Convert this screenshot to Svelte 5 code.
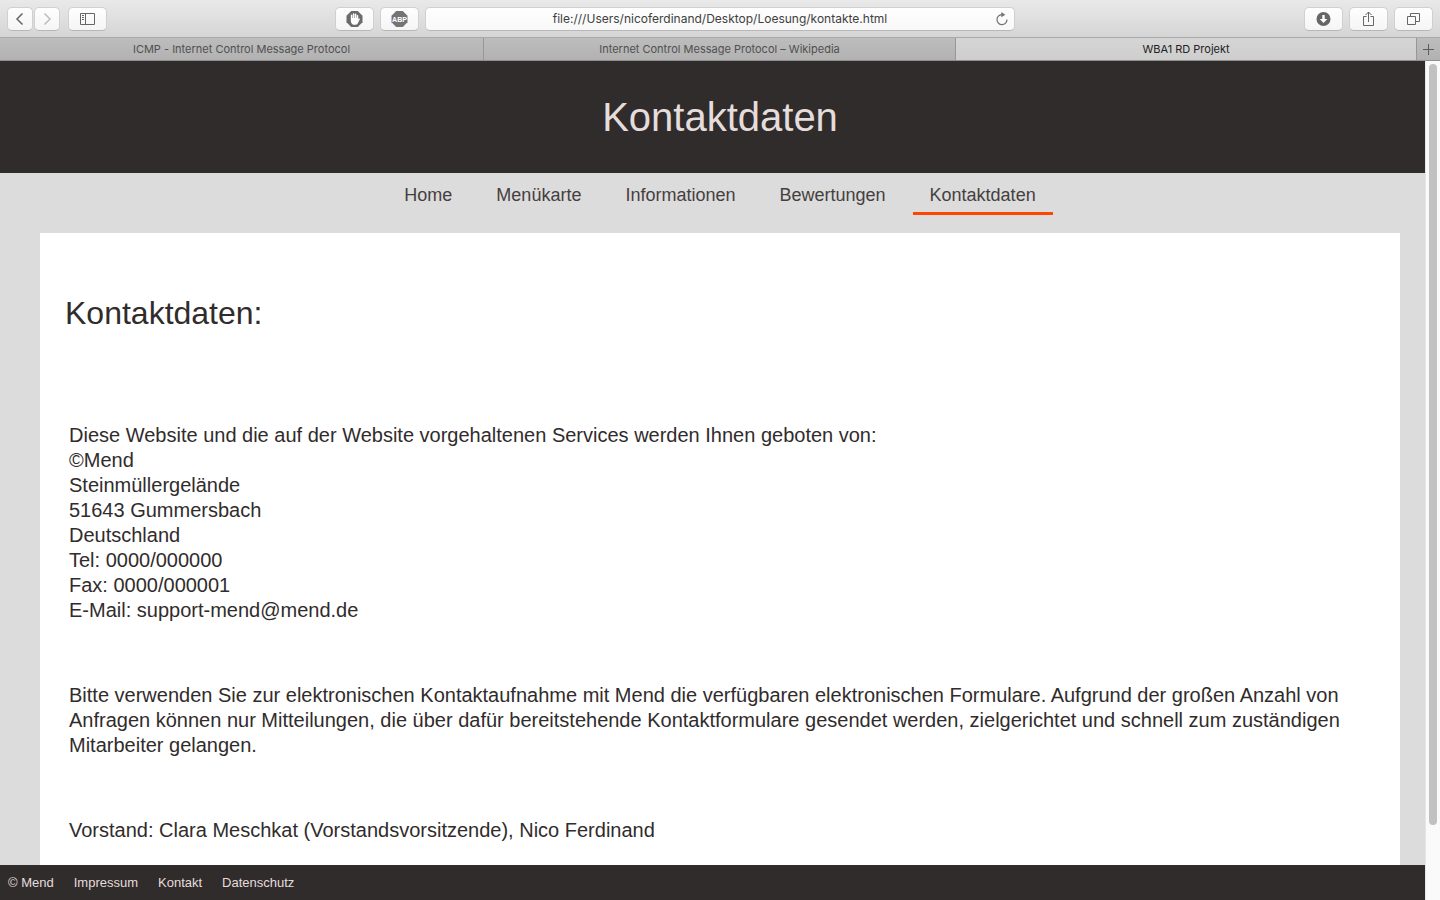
<script>
  const tabs = [
    'ICMP - Internet Control Message Protocol',
    'Internet Control Message Protocol – Wikipedia',
    'WBA1 RD Projekt'
  ];
  const activeTab = 2;
  const nav = ['Home', 'Menükarte', 'Informationen', 'Bewertungen', 'Kontaktdaten'];
  const current = 'Kontaktdaten';
  const footerLinks = ['Impressum', 'Kontakt', 'Datenschutz'];
  let address = $state('file:///Users/nicoferdinand/Desktop/Loesung/kontakte.html');
</script>

<div class="window">
  <div class="toolbar">
    <div class="side">
      <div class="group wide">
        <div class="pair">
          <button class="tool small" aria-label="Zurück">
            <svg width="12" height="14" viewBox="0 0 12 14"><path d="M8.5 1.5 3 7l5.5 5.5" fill="none" stroke="#666" stroke-width="1.5" /></svg>
          </button>
          <button class="tool small" aria-label="Vorwärts">
            <svg width="12" height="14" viewBox="0 0 12 14"><path d="M3.5 1.5 9 7l-5.5 5.5" fill="none" stroke="#bdbdbd" stroke-width="1.5" /></svg>
          </button>
        </div>
        <button class="tool" aria-label="Seitenleiste">
          <svg width="15" height="12" viewBox="0 0 15 12" fill="none" stroke="#666"><path d="M.5.5h14v11H.5zM5.5.5v11M2 2.500h2M2 4.500h2M2 6.500h2" /></svg>
        </button>
      </div>
      <div class="group">
        <button class="tool" aria-label="Blocker">
          <svg width="17" height="16" viewBox="0 0 16 16"><path d="M4.700 0h6.600L16 4.700v6.600L11.300 16H4.700L0 11.300V4.700z" fill="#6b6b6b" /><path d="M5.100 8V4.200M7.100 7.500V2.900M9.100 7.500V3.200M11 8V4.800" stroke="#fff" stroke-width="1.500" stroke-linecap="round" /><path d="M4.350 7h7.400v1.500l.5-.8c.5-.6 1.400-.3 1.100.5l-2.200 4.200c-.6 1-1.500 1.400-2.900 1.400-2.400 0-3.900-1.500-3.900-3.900z" fill="#fff" /></svg>
        </button>
        <button class="tool" aria-label="Adblock Plus">
          <svg width="17" height="16" viewBox="0 0 16 16"><path d="M4.700 0h6.600L16 4.700v6.600L11.300 16H4.700L0 11.300V4.700z" fill="#747474" /><text x="8" y="10.500" text-anchor="middle" font-family="Liberation Sans, sans-serif" font-size="7" font-weight="700" fill="#fff">ABP</text></svg>
        </button>
      </div>
    </div>
    <div class="address">
      <input type="text" aria-label="Adresse" bind:value={address} />
      <button class="reload" aria-label="Neu laden">
        <svg width="14" height="14" viewBox="0 0 14 14"><path d="M6.800 2.600a5 5 0 1 0 5.200 5" fill="none" stroke="#737373" stroke-width="1.200" /><path d="M6.300 0 10.300 2.700 6.300 5.300z" fill="#737373" /></svg>
      </button>
    </div>
    <div class="group right">
      <button class="tool" aria-label="Downloads">
        <svg width="15" height="14" viewBox="0 0 14 14"><circle cx="7" cy="7" r="7" fill="#666" /><path d="M5.800 3h2.400v4h2.600L7 11 3.200 7h2.600z" fill="#fff" /></svg>
      </button>
      <button class="tool" aria-label="Teilen">
        <svg width="13" height="16" viewBox="0 0 13 16" fill="none" stroke="#666"><path d="M4.500 5.500h-3v9h10v-9h-3M6.500 11V1M3.500 4l3-3 3 3" /></svg>
      </button>
      <button class="tool" aria-label="Alle Tabs">
        <svg width="13" height="12" viewBox="0 0 13 12" fill="none" stroke="#666"><path d="M.5 3.500h8v8h-8zM3.500 3V.5h9v8H9" /></svg>
      </button>
    </div>
  </div>

  <div class="tabs">
    {#each tabs as tab, i}
      <button class="tab" class:active={i === activeTab}>{tab}</button>
    {/each}
    <button class="tab add" aria-label="Neuer Tab">
      <svg width="11" height="11" viewBox="0 0 11 11"><path d="M5.500 0v11M0 5.500h11" stroke="#5c5c5c" /></svg>
    </button>
  </div>

  <div class="page">
    <header><h1>Kontaktdaten</h1></header>
    <nav>
      {#each nav as item}
        <a href="#top" class:current={item === current}>{item}</a>
      {/each}
    </nav>
    <main>
      <h2>Kontaktdaten:</h2>
      <div class="text">
        <p>
          Diese Website und die auf der Website vorgehaltenen Services werden Ihnen geboten von:<br />
          ©Mend<br />
          Steinmüllergelände<br />
          51643 Gummersbach<br />
          Deutschland<br />
          Tel: 0000/000000<br />
          Fax: 0000/000001<br />
          E-Mail: support-mend@mend.de
        </p>
        <p>
          Bitte verwenden Sie zur elektronischen Kontaktaufnahme mit Mend die verfügbaren elektronischen Formulare.
          Aufgrund der großen Anzahl von Anfragen können nur Mitteilungen, die über dafür bereitstehende
          Kontaktformulare gesendet werden, zielgerichtet und schnell zum zuständigen Mitarbeiter gelangen.
        </p>
        <p>Vorstand: Clara Meschkat (Vorstandsvorsitzende), Nico Ferdinand</p>
      </div>
    </main>
    <footer>
      <span>© Mend</span>
      {#each footerLinks as link}
        <a href="#top">{link}</a>
      {/each}
    </footer>
    <div class="scrollbar"><div class="thumb"></div></div>
  </div>
</div>

<style>
  :global(body) {
    margin: 0;
  }
  .window {
    display: flex;
    flex-direction: column;
    height: 100vh;
    overflow: hidden;
    font-family: 'Liberation Sans', Arial, sans-serif;
  }
  button {
    border: 0;
    padding: 0;
    margin: 0;
  }
  a {
    color: inherit;
    text-decoration: none;
  }
  svg {
    display: block;
  }
  .toolbar {
    display: grid;
    grid-template-columns: 206fr 295fr 206fr;
    gap: 6px;
    box-sizing: border-box;
    height: 38px;
    flex: none;
    padding: 7px 7px 0;
    background: linear-gradient(#e9e9e9, #d5d5d5);
    border-bottom: 1px solid #a9a9a9;
  }
  .side {
    display: flex;
    justify-content: space-between;
  }
  .group {
    display: flex;
    gap: 6px;
  }
  .wide {
    gap: 8px;
  }
  .right {
    justify-content: flex-end;
  }
  .pair {
    display: flex;
    gap: 1px;
  }
  .tool {
    display: flex;
    align-items: center;
    justify-content: center;
    width: 39px;
    height: 24px;
    background: linear-gradient(#fefefe, #f5f5f5);
    border: 1px solid #d0d0d0;
    border-bottom-color: #b7b7b7;
    border-radius: 5px;
    flex: none;
  }
  .small {
    width: 26px;
  }
  .address {
    position: relative;
    display: flex;
    height: 24px;
  }
  input {
    width: 100%;
    box-sizing: border-box;
    border: 1px solid #d0d0d0;
    border-bottom-color: #b7b7b7;
    border-radius: 5px;
    background: linear-gradient(#fefefe, #f8f8f8);
    text-align: center;
    font: 12px/20px Inter, sans-serif;
    color: #404040;
    padding: 0 24px;
  }
  .reload {
    position: absolute;
    right: 6px;
    top: 5px;
    background: none;
  }
  .tabs {
    display: grid;
    grid-template-columns: 484fr 472fr 461fr 23px;
    height: 23px;
    flex: none;
  }
  .tab {
    box-sizing: border-box;
    background: linear-gradient(#bdbdbd, #b2b2b2);
    border-bottom: 1px solid #8f8f8f;
    border-right: 1px solid #979797;
    font: 11px/22px Inter, sans-serif;
    color: #505050;
  }
  .tab.active {
    background: linear-gradient(#d5d5d5, #cecece);
    color: #222;
  }
  .add {
    display: flex;
    align-items: center;
    justify-content: center;
    border-right: 0;
  }
  .page {
    position: relative;
    display: flex;
    flex-direction: column;
    flex: 1;
    min-height: 0;
    background: #dcdcdc;
  }
  header {
    display: flex;
    align-items: center;
    justify-content: center;
    height: 112px;
    flex: none;
    background: #312c2c;
  }
  h1 {
    margin: 0;
    font-size: 40px;
    line-height: 48px;
    font-weight: 400;
    color: #e5dcdc;
  }
  nav {
    display: flex;
    justify-content: center;
    gap: 10px;
    height: 60px;
    flex: none;
  }
  nav a {
    box-sizing: border-box;
    height: 42px;
    padding: 11px 17px 0;
    border-bottom: 3px solid transparent;
    font-size: 18px;
    line-height: 22px;
    color: #463f3f;
  }
  nav a.current {
    border-bottom-color: #ff4500;
  }
  main {
    flex: 1;
    min-height: 0;
    overflow: hidden;
    margin: 0 40px;
    padding: 60px 25px 0;
    background: #fff;
    color: #312c2c;
  }
  h2 {
    margin: 0;
    font-size: 32px;
    line-height: 40px;
    font-weight: 400;
  }
  .text {
    padding: 90px 4px 0;
    font-size: 20px;
    line-height: 25px;
  }
  p {
    margin: 0 0 60px;
  }
  footer {
    display: flex;
    align-items: center;
    gap: 20px;
    height: 35px;
    flex: none;
    padding: 0 8px;
    background: #312c2c;
    color: #e5dcdc;
    font-size: 13px;
    line-height: 16px;
  }
  .scrollbar {
    position: absolute;
    top: 0;
    right: 0;
    bottom: 0;
    width: 15px;
    box-sizing: border-box;
    padding: 3px 3px 0;
    background: #fafafa;
    border-left: 1px solid #e6e6e6;
  }
  .thumb {
    height: 91%;
    border-radius: 4px;
    background: #c1c1c1;
  }
</style>
